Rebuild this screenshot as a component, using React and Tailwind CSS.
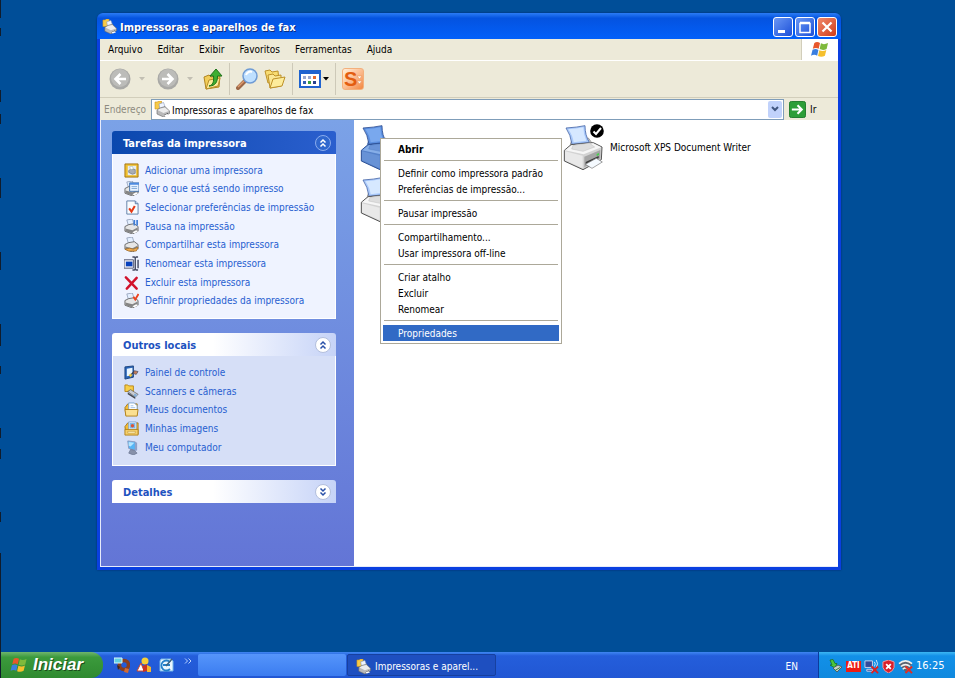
const Flag = ({ className }) => (
  <svg viewBox="0 0 20 18" className={className} aria-hidden="true">
    <path d="M4 2C6 .6 8 .8 10 2L8.600 8.200C6.800 7 4.600 7 2.400 8.200Z" fill="#e8572c" />
    <path d="M11 2.500C13 3.700 15.500 3.700 18.500 2.200L17 8.400C14.500 9.800 12 9.700 9.600 8.600Z" fill="#7fba3c" />
    <path d="M2.100 9.300C4.400 8 6.500 8.200 8.300 9.400L7 15.500C5 14.300 2.800 14.300.5 15.500Z" fill="#3b7fe0" />
    <path d="M9.300 9.800C11.800 11 14.200 10.900 16.700 9.600L15.200 15.600C12.800 17 10.200 17 7.900 15.900Z" fill="#f6c02d" />
  </svg>
);

const PrinterFolder = ({ className }) => (
  <svg viewBox="0 0 16 16" className={className} aria-hidden="true">
    <path d="M1 1h2.500l1-1h3v8H1z" fill="#f7ca48" stroke="#c99422" strokeWidth=".6" />
    <path d="M5 3l4.500-1.500L11.500 7 6 8.500z" fill="#f0f5ff" stroke="#8797b5" strokeWidth=".6" />
    <path d="M3 9l3-2 5-1.500L15.500 10v2.500L9.500 16 3 13z" fill="#b9b9b9" stroke="#666" strokeWidth=".6" />
    <path d="M3.500 9L6.500 7.500l4.500-1L15 10l-5.500 2z" fill="#ededed" />
    <path d="M10 14l4-2v1l-4 2z" fill="#444" />
    <path d="M10 14.500l3-1.500 2 1-3.500 1.500z" fill="#fff" />
  </svg>
);

const BigPrinter = ({ selected }) => (
  <svg viewBox="12 10 120 141" className="h-[47px] w-10 shrink-0" aria-hidden="true">
    <path d="M34 71L38 60L88 52L104 74L72 90Z" fill={selected ? '#6690d4' : '#cfcfcf'} stroke={selected ? '#3c65ab' : '#777'} strokeWidth="2" />
    <path d="M21 22Q54 20 78 15Q78 44 91 65L39 71Q35 42 21 22Z" fill={selected ? '#5b8fe0' : '#a9c9fb'} stroke={selected ? '#2c4d91' : '#4868a8'} strokeWidth="2.500" />
    <path d="M28 26Q54 24 73 20Q73 42 82 60L44 65Q41 44 28 26Z" fill={selected ? '#79a8ee' : '#d6e8ff'} />
    <path d="M16 89L36 72L103 66L129 79L127 117L72 147L16 121Z" fill={selected ? '#5481c9' : '#d3d3d3'} stroke={selected ? '#2d5196' : '#555'} strokeWidth="3" />
    <path d="M18 89L38 74L102 68L127 80L74 101Z" fill={selected ? '#86aee8' : '#f6f6f6'} />
    <path d="M38 85L42 74L91 67L107 79L72 92Z" fill={selected ? '#6993d8' : '#dedede'} stroke={selected ? '#4672b8' : '#aaa'} />
    <path d="M18 92L71 105V143L18 119Z" fill={selected ? '#6792d6' : '#e9e9e9'} />
    <path d="M76 108L124 88V113L76 140Z" fill={selected ? '#416db4' : '#a5a5a5'} />
    <path d="M80 124L119 106V112L80 132Z" fill={selected ? '#264887' : '#393939'} />
    <path d="M79 131L112 113L130 124L99 143Z" fill={selected ? '#89b0ec' : '#f5faff'} stroke={selected ? '#315895' : '#777'} strokeWidth="2" />
    <path d="M113 100l7-3v6l-7 3z" fill={selected ? '#4385b9' : '#46cf4d'} />
  </svg>
);

const MiniPrinter = ({ children }) => (
  <>
    <path d="M3 1l6-1 2 7-6 1z" fill="#e4efff" stroke="#7d8da8" strokeWidth=".7" />
    <path d="M1 8l4-2 6-1 4 3v5l-6 3-8-3z" fill="#e6e6e6" stroke="#5c5c5c" strokeWidth=".9" />
    <path d="M1.500 10l7.500 2 5.500-3v4L9 15.500 1.500 13z" fill="#858585" />
    <path d="M9 14l4-2 2 1-4 2.500z" fill="#fff" />
    {children}
  </>
);

const taskIcons = {
  add: (
    <>
      <path d="M1 1h14v14H1z" fill="#f0c030" stroke="#a37312" />
      <path d="M4 3h9v10H4z" fill="#e8edf3" />
      <path d="M5 8l3-2 4 1v4l-3 1-4-2z" fill="#a9adb5" stroke="#666" strokeWidth=".6" />
      <path d="M6 4l3-.5 1 3-3 .5z" fill="#fff" stroke="#8aa" strokeWidth=".5" />
    </>
  ),
  queue: (
    <>
      <MiniPrinter />
      <path d="M6 2h10v9H6z" fill="#e9f3ff" stroke="#426fa8" />
      <path d="M6 2h10v2H6z" fill="#4e8be0" />
      <path d="M8 6h6M8 8h6" stroke="#81a9d8" />
    </>
  ),
  prefs: (
    <>
      <path d="M3 1h9l3 3v11H3z" fill="#f8fbff" stroke="#5f7fa8" />
      <path d="M12 1v3h3" fill="#b9d2ee" stroke="#5f7fa8" />
      <path d="M5.500 9l2.500 3.500 3.500-6" fill="none" stroke="#e53915" strokeWidth="2.200" />
    </>
  ),
  pause: <MiniPrinter><path d="M11 1v6M14 1v6" stroke="#3f7ed8" strokeWidth="1.800" /></MiniPrinter>,
  share: <MiniPrinter><path d="M1 13l5-1 4 1 5-2-2 4H5z" fill="#efad54" stroke="#a76819" strokeWidth=".7" /></MiniPrinter>,
  rename: (
    <>
      <path d="M0 4h10v9H0z" fill="#ececf4" stroke="#555b75" />
      <path d="M2 6h7v5H2z" fill="#0740bd" />
      <path d="M9 1h2l1 1 1-1h2M12 2v12M9 15h2l1-1 1 1h2M15 4v9" fill="none" stroke="#454b63" strokeWidth="1.500" />
    </>
  ),
  remove: <path d="M2 2.500l11.500 12M13.500 3L3 14.500" stroke="#d1122c" strokeWidth="2.600" strokeLinecap="round" />,
  props: <MiniPrinter><path d="M10 4l2 3 3.500-6" fill="none" stroke="#ed4420" strokeWidth="2" /></MiniPrinter>,
  panel: (
    <>
      <path d="M1 2l9-1v12l-9 2z" fill="#2864b8" stroke="#1b437e" />
      <path d="M3 4l6-1v8l-6 1z" fill="#e9f5ff" />
      <path d="M6 12l5-5" stroke="#313a4f" strokeWidth="1.500" />
      <path d="M11 6l4 1-2 3-3-1z" fill="#ca7e58" stroke="#414a5f" strokeWidth=".7" />
      <path d="M5 11l2-2 2 2-2 2z" fill="#e8c443" />
    </>
  ),
  scanner: (
    <>
      <path d="M1 1h3l1 1h5v6H1z" fill="#f7ce48" stroke="#b98616" />
      <path d="M4 8l3-2 8 5-3 3z" fill="#c9ccd2" stroke="#555" strokeWidth=".7" />
      <path d="M4 9l8 5v2l-8-5z" fill="#454950" />
      <circle cx="12" cy="12" r="1.500" fill="#86b0db" />
    </>
  ),
  docs: (
    <>
      <path d="M1 6l3-4h10v12H2z" fill="#f3bd38" stroke="#a87816" />
      <path d="M5 1h6l3 3v8H5z" fill="#fff" stroke="#7fa5d0" />
      <path d="M7 4h3M7 6h5" stroke="#9fc0e8" />
      <path d="M1 8h14l-1 7H2z" fill="#fbe090" stroke="#b2821c" />
    </>
  ),
  images: (
    <>
      <path d="M1 6l3-4h11v12H2z" fill="#f3bd38" stroke="#a87816" />
      <path d="M5 1h8v9H5z" fill="#fff" stroke="#7fa5d0" />
      <path d="M6 2h6v6H6z" fill="#79b9eb" />
      <circle cx="9" cy="5" r="1.800" fill="#dd5535" />
      <path d="M1 9h14v6H1z" fill="#f5cf6a" stroke="#b2821c" />
      <path d="M4 11h8v2H4z" fill="#fff0bd" stroke="#b2821c" strokeWidth=".5" />
    </>
  ),
  computer: (
    <>
      <path d="M4 1l8 1v9l-7-2z" fill="#55b6f7" stroke="#8b9bc0" />
      <path d="M12 2l2 1v8l-2 1z" fill="#8fa0c8" />
      <path d="M5 2l6 1-4 4-2-1z" fill="#b5e5ff" />
      <path d="M7 10l4 1 3 3-4 2-5-2z" fill="#8791aa" stroke="#606b88" strokeWidth=".6" />
    </>
  ),
};

const Chevrons = ({ down, dark }) => (
  <svg viewBox="0 0 18 18" className="size-[18px]" aria-hidden="true">
    <circle cx="9" cy="9" r="7.500" fill={dark ? '#2f67ce' : '#fff'} stroke={dark ? '#8aaced' : '#b3bfdd'} />
    <path
      d={down ? 'M6.500 5.500L9 8l2.500-2.500M6.500 9.500L9 12l2.500-2.500' : 'M6.500 8.500L9 6l2.500 2.500M6.500 12.500L9 10l2.500 2.500'}
      fill="none"
      stroke={dark ? '#fff' : '#2950a8'}
      strokeWidth="1.500"
    />
  </svg>
);

const Panel = ({ title, items, primary, collapsed }) => (
  <section>
    <h2 className={`flex h-[23px] items-center justify-between rounded-t-[3px] pl-[11px] pr-1 text-[11px] font-bold ${primary ? 'bg-linear-to-r from-[#0a48ae] to-[#2a5fce] text-white' : 'bg-linear-to-r from-white from-45% to-[#c6d3f7] text-[#1d52c0]'}`}>
      <span className="pt-1">{title}</span>
      <button aria-label={title} aria-expanded={!collapsed}><Chevrons dark={primary} down={collapsed} /></button>
    </h2>
    {items && (
      <ul className={`flex flex-col border border-t-0 border-white px-[11px] pt-[7px] pb-2 ${primary ? 'h-[165px] bg-[#eff3ff]' : 'h-[110px] bg-[#d6dff7]'}`}>
        {items.map(([icon, label]) => (
          <li key={label} className="flex flex-1 items-center">
            <a href="#" className="flex items-center gap-1.5 whitespace-nowrap text-[#2760d0]">
              <svg viewBox="0 0 16 16" className="size-[15px]" aria-hidden="true">{taskIcons[icon]}</svg>
              {label}
            </a>
          </li>
        ))}
      </ul>
    )}
  </section>
);

const tasks = [
  ['add', 'Adicionar uma impressora'],
  ['queue', 'Ver o que está sendo impresso'],
  ['prefs', 'Selecionar preferências de impressão'],
  ['pause', 'Pausa na impressão'],
  ['share', 'Compartilhar esta impressora'],
  ['rename', 'Renomear esta impressora'],
  ['remove', 'Excluir esta impressora'],
  ['props', 'Definir propriedades da impressora'],
];

const places = [
  ['panel', 'Painel de controle'],
  ['scanner', 'Scanners e câmeras'],
  ['docs', 'Meus documentos'],
  ['images', 'Minhas imagens'],
  ['computer', 'Meu computador'],
];

const menuGroups = [
  ['Abrir'],
  ['Definir como impressora padrão', 'Preferências de impressão...'],
  ['Pausar impressão'],
  ['Compartilhamento...', 'Usar impressora off-line'],
  ['Criar atalho', 'Excluir', 'Renomear'],
  ['Propriedades'],
];

const ContextMenu = () => (
  <div role="menu" className="absolute left-[26px] top-[18px] z-10 w-[182px] border border-[#aca899] bg-white p-0.5">
    {menuGroups.map((group, i) => (
      <div key={group[0]}>
        {i > 0 && <hr className="mx-px mt-[3px] mb-1 border-[#aca899]" />}
        {group.map((label) => (
          <button
            key={label}
            role="menuitem"
            className={`block h-4 w-full whitespace-nowrap pl-[15px] text-left leading-[18px] ${label === 'Abrir' ? 'font-bold' : ''} ${label === 'Propriedades' ? 'bg-[#316ac5] text-white' : ''}`}
          >
            {label}
          </button>
        ))}
      </div>
    ))}
  </div>
);

const TitleBar = () => (
  <header className="-mx-[3px] flex h-[26px] shrink-0 items-center rounded-t-md bg-linear-to-b from-[#2a7cf5] via-[#0453e0] via-20% to-[#0260fa] pr-1 pl-[5px]">
    <PrinterFolder className="size-[15px]" />
    <h1 className="flex-1 pl-[3px] pt-1 text-[11px] font-bold text-white [text-shadow:1px_1px_#0a2c80]">Impressoras e aparelhos de fax</h1>
    <div className="flex gap-0.5 pt-0.5">
      <button aria-label="Minimizar" className="size-5 rounded-[3px] border border-white bg-linear-to-br from-[#6a96f4] to-[#1c4dd8]">
        <svg viewBox="0 0 18 18"><path d="M4 12h7v3H4z" fill="#fff" /></svg>
      </button>
      <button aria-label="Maximizar" className="size-5 rounded-[3px] border border-white bg-linear-to-br from-[#6a96f4] to-[#1c4dd8]">
        <svg viewBox="0 0 18 18"><path d="M4 5.500h10v9H4zM4 4.500h10" fill="none" stroke="#fff" strokeWidth="1.500" /></svg>
      </button>
      <button aria-label="Fechar" className="size-5 rounded-[3px] border border-white bg-linear-to-br from-[#f0886a] to-[#cf3a15]">
        <svg viewBox="0 0 18 18"><path d="M4.500 4.500l9 9M13.500 4.500l-9 9" stroke="#fff" strokeWidth="2.200" /></svg>
      </button>
    </div>
  </header>
);

const NavArrow = ({ back }) => (
  <svg viewBox="0 0 22 22" className="size-[22px]" aria-hidden="true">
    <circle cx="11" cy="11" r="10.500" fill="#a9a9a6" />
    <circle cx="11" cy="10" r="9" fill="#bcbcb9" />
    <path d={back ? 'M17 11H7M11.500 6L6.500 11l5 5' : 'M5 11h10M10.500 6l5 5-5 5'} fill="none" stroke="#fff" strokeWidth="2.600" />
  </svg>
);

const Caret = ({ className }) => (
  <svg viewBox="0 0 6 4" className={`h-1 w-1.5 ${className ?? ''}`} aria-hidden="true"><path d="M0 0h6L3 3.500z" fill="currentColor" /></svg>
);

const Folders = () => (
  <svg viewBox="0 0 22 20" className="h-5 w-[22px]" aria-hidden="true">
    <path d="M1 2l5-1 2 2 6-1 1 10-11 2z" fill="#f8dc72" stroke="#bd9128" />
    <path d="M4 6l5-1 2 2 6-1v11L6 19z" fill="#fbe795" stroke="#bd9128" />
    <path d="M6 19L9 10l12-2-3 9z" fill="#fdec9b" stroke="#bd9128" />
  </svg>
);

const Toolbar = () => (
  <div className="flex h-[37px] shrink-0 items-center border-t border-white bg-[#edead9] pl-[9px] text-[#c2bfb3]">
    <button aria-label="Voltar" className="flex items-center gap-2"><NavArrow back /><Caret /></button>
    <button aria-label="Avançar" className="ml-3 flex items-center gap-2"><NavArrow /><Caret /></button>
    <button aria-label="Acima" className="ml-2.5">
      <svg viewBox="0 0 20 22" className="h-[22px] w-5">
        <path d="M1 9l5-2 2 2 9-2-1 12-13 2z" fill="#f2cd59" stroke="#b08420" />
        <path d="M3 21L6 12l11-2-2 8z" fill="#fdeb9a" stroke="#b98e28" />
        <path d="M6 18c4-1 5-4 4.500-10H7l6-7 6 7h-4.500c0 6-2 10-8.500 10z" fill="#3eae31" stroke="#1e7318" />
      </svg>
    </button>
    <span className="mx-1.5 h-8 border-l border-[#cdc9b8]" />
    <button aria-label="Pesquisar" className="mr-1.5">
      <svg viewBox="0 0 22 22" className="size-[22px]">
        <path d="M9 13l-7 7" stroke="#9c6746" strokeWidth="4" strokeLinecap="round" />
        <path d="M8 13l-6 6" stroke="#df9b6d" strokeWidth="1.500" />
        <circle cx="14" cy="8" r="7" fill="#bfe0ff" stroke="#6f9bd4" strokeWidth="1.500" />
        <path d="M10 7c1-3 4-4 6-3" fill="none" stroke="#fff" strokeWidth="2" />
      </svg>
    </button>
    <button aria-label="Pastas"><Folders /></button>
    <span className="mx-1.5 h-8 border-l border-[#cdc9b8]" />
    <button aria-label="Modos de exibição" className="flex items-center gap-0.5">
      <svg viewBox="0 0 22 18" className="h-[18px] w-[22px]">
        <path d="M0 0h22v18H0z" fill="#1f63cf" />
        <path d="M2 4h18v12H2z" fill="#fff" />
        <path d="M4 6h3v3H4zM9 6h3v3H9z" fill="#9aa8cf" /><path d="M14 6h3v3h-3z" fill="#e4692e" />
        <path d="M4 11h3v3H4z" fill="#335fb5" /><path d="M9 11h3v3H9z" fill="#3a9f40" /><path d="M14 11h3v3h-3z" fill="#27408e" />
      </svg>
      <Caret className="text-black" />
    </button>
    <span className="mx-1.5 h-8 border-l border-[#cdc9b8]" />
    <button aria-label="S" className="relative flex size-[22px] items-center rounded-[3px] border border-[#f3b07c] bg-linear-to-br from-[#fff0dc] to-[#f2873c] pl-px font-['Liberation_Sans',sans-serif] text-[20px] leading-none font-bold text-[#e35d10]">
      S
      <svg viewBox="0 0 8 14" className="absolute right-0 bottom-0.5 h-3.5 w-2" aria-hidden="true">
        <path d="M2 3h5L4.500 6zM2 8h5l-2.500 3z" fill="#fff" stroke="#ec9b63" strokeWidth=".7" />
      </svg>
    </button>
  </div>
);

const AddressBar = () => (
  <form className="flex h-[23px] shrink-0 items-center border-t border-[#d2cebb] bg-[#edead9] pl-1">
    <label htmlFor="address" className="w-[47px] text-[#8d8a80]">Endereço</label>
    <div className="flex h-[21px] flex-1 items-center border border-[#7f9db9] bg-white pl-0.5">
      <PrinterFolder className="size-4" />
      <input id="address" defaultValue="Impressoras e aparelhos de fax" className="min-w-0 flex-1 pt-0.5 pl-0.5 outline-none" />
      <button type="button" aria-label="Mostrar endereços" className="mr-px flex h-[17px] w-3.5 items-center justify-center rounded-[2px] bg-[#c1d2fb]">
        <svg viewBox="0 0 8 6" className="h-1.5 w-2"><path d="M1 1l3 3 3-3" fill="none" stroke="#40567f" strokeWidth="2" /></svg>
      </button>
    </div>
    <button type="button" className="flex w-[54px] items-center gap-1 pl-[5px]">
      <svg viewBox="0 0 18 18" className="size-[17px]" aria-hidden="true">
        <rect x=".5" y=".5" width="17" height="17" rx="2" fill="#2c9e38" stroke="#1d7a2a" />
        <path d="M3 9h10M9 4.500L13.500 9 9 13.500" fill="none" stroke="#fff" strokeWidth="2.200" />
      </svg>
      Ir
    </button>
  </form>
);

const ExplorerWindow = () => (
  <main className="flex min-h-0 flex-1 flex-col rounded-t-lg border-x-[3px] border-b-[3px] border-[#0a3fe0] bg-[#0453e0] shadow-[0_0_2px_#00206a]">
    <TitleBar />
    <nav className="flex h-[21px] shrink-0 items-center bg-[#edead9] pl-2">
      <div className="flex flex-1 gap-[15px]">
        {['Arquivo', 'Editar', 'Exibir', 'Favoritos', 'Ferramentas', 'Ajuda'].map((m) => <button key={m}>{m}</button>)}
      </div>
      <span className="flex h-full w-[37px] items-center justify-center border-l border-[#d2cebb] bg-white"><Flag className="h-[17px] w-5" /></span>
    </nav>
    <Toolbar />
    <AddressBar />
    <div className="flex min-h-0 flex-1 border border-t-0 border-r-0 border-[#e6ebfa] bg-white">
      <aside className="flex w-[253px] shrink-0 flex-col gap-3.5 bg-linear-to-b from-[#7ba2e7] to-[#6375d6] pt-[11px] pr-[18px] pl-[11px]">
        <Panel title="Tarefas da impressora" items={tasks} primary />
        <Panel title="Outros locais" items={places} />
        <Panel title="Detalhes" collapsed />
      </aside>
      <div className="relative flex-1">
        <div className="grid grid-cols-[203px_1fr] gap-y-[5px] pt-1 pl-1.5">
          <button aria-label="Impressora" className="flex"><BigPrinter selected /></button>
          <button className="relative flex items-center gap-[7px]">
            <BigPrinter />
            <svg viewBox="0 0 14 14" className="absolute top-0 left-[27px] size-3.5" aria-hidden="true">
              <circle cx="7" cy="7" r="6.800" /><path d="M3.500 7.500L6 10l5-6" fill="none" stroke="#fff" strokeWidth="2" />
            </svg>
            Microsoft XPS Document Writer
          </button>
          <button aria-label="Impressora 2" className="flex"><BigPrinter /></button>
        </div>
        <ContextMenu />
      </div>
    </div>
  </main>
);

const QuickLaunch = () => (
  <div className="flex items-center gap-1.5 pl-[11px]">
    <button aria-label="Dispositivos">
      <svg viewBox="0 0 16 16" className="size-4">
        <circle cx="10" cy="8" r="4.500" fill="none" stroke="#8a3f1f" strokeWidth="3.500" />
        <path d="M0 1h8v5H0z" fill="#62d1e4" stroke="#d9f8fc" /><path d="M3 8l3 2-2 3z" fill="#3d251b" />
        <path d="M11 11l4 1-1 4-4-1z" fill="#d06a35" />
      </svg>
    </button>
    <button aria-label="Formas">
      <svg viewBox="0 0 16 16" className="size-4">
        <circle cx="9" cy="4" r="3.500" fill="#f6cf36" /><path d="M1 14l4-8 3 8z" fill="#fff" stroke="#cc4428" />
        <path d="M7 9l4-2v7l-4 1z" fill="#cb3222" /><path d="M11 8l4 2v5h-4z" fill="#f5b52e" />
      </svg>
    </button>
    <button aria-label="Área de trabalho">
      <svg viewBox="0 0 16 16" className="size-4">
        <path d="M3 2h10l2 2v10H2V4z" fill="#eaf6ff" stroke="#74b7e8" />
        <path d="M12 5A5 5 0 1 0 12 12M5 8h7" fill="none" stroke="#247fc9" strokeWidth="1.800" /><path d="M8 9l6-7" stroke="#40627d" strokeWidth="1.500" />
      </svg>
    </button>
    <button aria-label="Mais" className="mb-2 ml-1">
      <svg viewBox="0 0 8 6" className="h-1.5 w-2"><path d="M1 .5L3.500 3 1 5.500M4.500 .5L7 3 4.500 5.500" fill="none" stroke="#b9d2ff" /></svg>
    </button>
  </div>
);

const Tray = () => (
  <div className="flex h-full w-[137px] items-center gap-[3px] border-l border-[#0c3b9c] bg-linear-to-b from-[#3bb7f3] via-[#1290e8] via-15% to-[#1089de] pt-0.5 pl-2.5 text-white">
    <svg viewBox="0 0 14 14" className="size-3.5" aria-hidden="true">
      <path d="M1 1l3-.5 2 4h2l-2 4.500-5-3h2z" fill="#4dc63b" stroke="#196a1c" strokeWidth=".7" />
      <path d="M4 9l5-3 4 2-5 5z" fill="#c9cfc5" stroke="#465046" strokeWidth=".8" /><path d="M6 11.500l5-3" stroke="#36843e" />
    </svg>
    <span className="flex h-[11px] w-[15px] items-center justify-center bg-[#ed1b12] text-[8px] font-bold">ATI</span>
    <svg viewBox="0 0 16 16" className="size-[15px]" aria-hidden="true">
      <path d="M1 2h8v7H1zM3 11h6v2H3z" fill="#314b9d" stroke="#cdd6ed" />
      <path d="M11 3q2 2 0 5M13 1q3 4 0 8" fill="none" stroke="#d9e7fb" /><path d="M8 8l7 7M15 8l-7 7" stroke="#df2020" strokeWidth="2" />
    </svg>
    <svg viewBox="0 0 14 14" className="size-[13px]" aria-hidden="true">
      <path d="M7 0l6 2v6q-1 4-6 6Q2 12 1 8V2z" fill="#d91e2a" stroke="#f0a0a5" />
      <path d="M4.500 4.500l5 5M9.500 4.500l-5 5" stroke="#fff" strokeWidth="2" />
    </svg>
    <svg viewBox="0 0 16 16" className="size-[15px]" aria-hidden="true">
      <path d="M1 5q7-6 14 0L8 14z" fill="#5d6570" />
      <path d="M1 5q7-6 14 0M3 8q5-4 10 0M5 11q3-3 6 0" fill="none" stroke="#f1f1ee" strokeWidth="1.600" />
      <path d="M8 8l7 7M15 8l-7 7" stroke="#e52b20" strokeWidth="2" />
    </svg>
    <time className="text-[11px]">16:25</time>
  </div>
);

const Taskbar = () => (
  <footer className="flex h-[26px] shrink-0 items-center bg-linear-to-b from-[#3f86f2] via-[#245edb] via-15% to-[#2157d4]">
    <button className="flex h-full w-[103px] items-center gap-[5px] rounded-r-xl bg-linear-to-b from-[#6fb56d] via-[#3b9a3c] via-20% to-[#2f8a30] pl-2.5 font-['Liberation_Sans',sans-serif] text-[17px] font-bold text-white italic [text-shadow:1px_1px_#1b4d1b]">
      <Flag className="h-4 w-[18px]" />
      Iniciar
    </button>
    <QuickLaunch />
    <button aria-label="Tarefa" className="ml-1.5 h-[22px] w-[148px] rounded-[2px] bg-linear-to-b from-[#5595fb] to-[#3b7cf0]" />
    <button className="ml-px flex h-[22px] w-[149px] items-center gap-1 rounded-[2px] border border-[#17409f] bg-[#1e4fc0] pt-0.5 pl-2 text-white">
      <PrinterFolder className="size-[15px]" />
      Impressoras e aparel...
    </button>
    <span className="flex-1" />
    <button className="mr-5 pt-0.5 text-white">EN</button>
    <Tray />
  </footer>
);

const edgeMarks = [[0, 18], [28, 8], [90, 12], [114, 10], [178, 20], [252, 18], [324, 22], [366, 8], [428, 10], [449, 10], [512, 10], [553, 125]];

export default function App() {
  return (
    <div className="relative flex h-screen flex-col bg-[#004e98] font-['DejaVu_Sans_Condensed','DejaVu_Sans',sans-serif] text-[10px] text-black">
      <div className="flex min-h-0 flex-1 flex-col pt-[13px] pr-[114px] pb-[82px] pl-[97px]">
        <ExplorerWindow />
      </div>
      <Taskbar />
      <svg className="absolute top-0 left-0 h-full w-px" aria-hidden="true">
        {edgeMarks.map(([y, h]) => <rect key={y} y={y} width="1" height={h} fill="#101c2c" />)}
      </svg>
    </div>
  );
}
